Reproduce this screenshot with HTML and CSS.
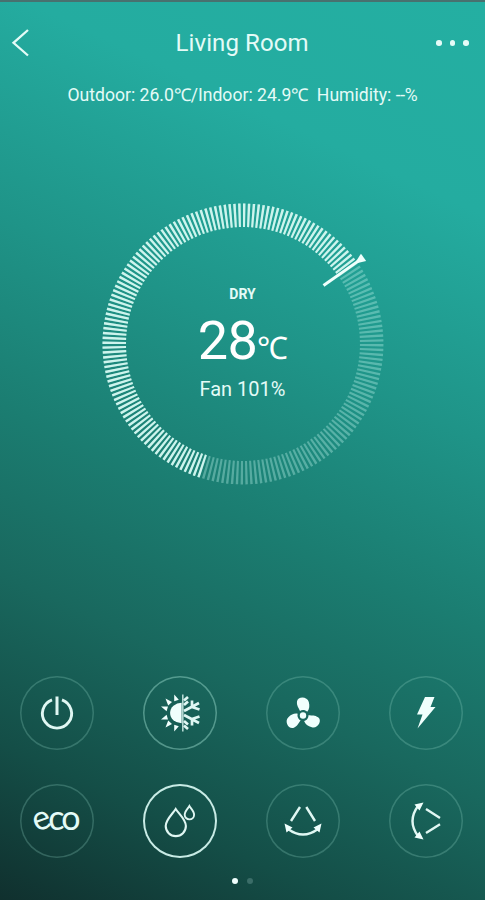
FILE: index.html
```
<!DOCTYPE html>
<html lang="en">
<head>
    <meta charset="UTF-8">
    <meta name="viewport" content="width=device-width, initial-scale=1.0">
    <title>Living Room</title>
    <link rel="stylesheet" href="styles.css">
</head>
<body>
    <div class="app">
        <header class="top-bar">
            <a href="#back" class="back" aria-label="Back">
                <svg width="20" height="30" viewBox="0 0 20 30"><path d="M18 2 L3.5 14.8 L18 27.5"/></svg>
            </a>
            <h1>Living Room</h1>
            <div class="more"><span></span><span></span><span></span></div>
        </header>

        <p class="climate">Outdoor: 26.0<span class="deg">℃</span>/Indoor: 24.9<span class="deg">℃</span>&nbsp; Humidity: <span class="dashes">--</span>%</p>

        <div class="dial">
            <svg class="dial-ring" width="290" height="290" viewBox="-145 -145 290 290">
                <circle class="ticks" r="128.7" pathLength="360"/>
                <path class="ticks on" pathLength="216" d="M-39.8 122.4 A128.7 128.7 0 1 1 104.1 -75.6"/>
                <g transform="translate(-1.2 -0.8) rotate(54.8)">
                    <path class="needle" d="M0 -100 V-145"/>
                    <path class="needle-tip" d="M-4.5 -149 H4.5 L1.2 -141 H-1.2 Z"/>
                </g>
            </svg>
            <div class="reading">
                <div class="mode">DRY</div>
                <div class="temp">28<span class="unit">℃</span></div>
                <div class="fan">Fan 101%</div>
            </div>
        </div>

        <div class="controls">
            <button aria-label="Power">
                <svg class="line" viewBox="-37 -37 74 74">
                    <path stroke-width="2.9" d="M-5 -13.2 A14.6 14.6 0 1 0 5 -13.2"/>
                    <path stroke-width="3" d="M0 -16.5 V2"/>
                </svg>
            </button>
            <button class="lit" aria-label="Mode">
                <svg viewBox="-37 -37 74 74">
                    <path class="fill" d="M1.6 -10.2 A11.5 10.2 0 0 0 1.6 10.2 Z"/>
                    <path class="fill" d="M-5.8 -18.5 L-1.2 -13.2 L-5.8 -11.8 Z M-14.5 -14.5 L-8 -11 L-11.8 -7.6 Z M-19 -6.5 L-12 -6.4 L-13.4 -1.7 Z M-19 6.5 L-13.4 1.7 L-12 6.4 Z M-14.5 14.5 L-11.8 7.6 L-8 11 Z M-5.8 18.5 L-5.8 11.8 L-1.2 13.2 Z"/>
                    <path class="thin" d="M2.8 -18.5 V18.5"/>
                    <g class="line" stroke-width="2.7">
                        <path d="M4 -12.5 L8 -16 M4 12.5 L8 16 M4 -8 L8 -11.5 M4 8 L8 11.5 M4 -2 L19 -10 M4 2 L19 10 M12 -6 L12 -12.5 M12 -6 L19.5 -3.5 M12 6 L12 12.5 M12 6 L19.5 3.5"/>
                    </g>
                </svg>
            </button>
            <button aria-label="Fan">
                <svg viewBox="-37 -37 74 74">
                    <g class="fill" transform="translate(0 2.5)">
                        <circle r="3.2"/>
                        <path id="blade" d="M-3 -4.5 C-4.5 -8 -6.5 -10 -6 -14 C-5.5 -19.5 4.5 -19.5 5.8 -13.5 C6.8 -9.5 6.5 -6.5 4.2 -3.7 C2.5 -5.6 -1 -6 -3 -4.5 Z"/>
                        <use href="#blade" transform="rotate(120)"/>
                        <use href="#blade" transform="rotate(240)"/>
                    </g>
                </svg>
            </button>
            <button aria-label="Turbo">
                <svg viewBox="-37 -37 74 74">
                    <path class="fill" d="M-1 -16 H8.5 L4.5 -6 H9.5 L-8.5 15.5 L-3.5 1.5 H-9 Z"/>
                </svg>
            </button>
            <button aria-label="Eco"><span class="eco"><span class="tilt">e</span>co</span></button>
            <button class="active" aria-label="Dry">
                <svg class="line" viewBox="-37 -37 74 74">
                    <path stroke-width="2.1" d="M-4.3 -12 C-7 -7.5 -14.3 -1.5 -14.3 5 A10.1 10.1 0 0 0 5.9 5 C5.9 -1.5 -1.5 -7.5 -4.3 -12 Z"/>
                    <path stroke-width="1.9" d="M9.4 -15 C8 -12.5 4.7 -9.5 4.7 -6.3 A4.7 4.7 0 0 0 14.1 -6.3 C14.1 -9.5 10.8 -12.5 9.4 -15 Z"/>
                </svg>
            </button>
            <button aria-label="Horizontal swing">
                <svg viewBox="-37 -37 74 74">
                    <g id="swing">
                        <path class="line" stroke-width="2.4" d="M-3 -14 L-12 0 M3.3 -14 L12 0 M-15 8 Q0 19 15 8"/>
                        <path class="fill" d="M-18.5 2.5 L-10.5 6.5 L-16.5 11.5 Z M18.5 2.5 L10.5 6.5 L16.5 11.5 Z"/>
                    </g>
                </svg>
            </button>
            <button aria-label="Vertical swing">
                <svg viewBox="-37 -37 74 74"><use href="#swing" transform="rotate(90)"/></svg>
            </button>
        </div>

        <div class="pager"><span class="current"></span><span></span></div>
    </div>
</body>
</html>
```
FILE: styles.css
```
* {
    box-sizing: border-box;
}
body {
    margin: 0;
    font-family: Roboto, "Liberation Sans", sans-serif;
    color: #e4fbf7;
}
.app {
    height: 900px;
    border-top: 2px solid #48716f;
    background: linear-gradient(205deg, #24afa2 0%, #24aca0 19%, #1f9488 39%, #1b7d71 56%, #19685e 71%, #144e47 86%, #10302e 100%);
    display: flex;
    flex-direction: column;
    overflow: hidden;
}
.top-bar {
    display: flex;
    align-items: center;
    justify-content: space-between;
    height: 82px;
    padding: 0 16px 0 10px;
}
.back {
    width: 38px;
    height: 30px;
}
.back path {
    fill: none;
    stroke: #e4fbf7;
    stroke-width: 2.3;
}
h1 {
    margin: 0;
    font-size: 24px;
    font-weight: 400;
    letter-spacing: 0.1px;
}
.more {
    display: flex;
    gap: 8px;
}
.more span {
    width: 5.6px;
    height: 5.6px;
    border-radius: 50%;
    background: #e4fbf7;
}
.climate {
    margin: 0;
    height: 24px;
    line-height: 23px;
    font-size: 17.6px;
    text-align: center;
    white-space: nowrap;
}
.deg {
    letter-spacing: -1.2px;
}
.dashes {
    letter-spacing: -0.4px;
}
.dial {
    display: grid;
    place-items: center;
    width: 290px;
    height: 290px;
    margin: 91px auto 0;
}
.dial-ring, .reading {
    grid-area: 1 / 1;
}
.dial-ring {
    overflow: visible;
}
.ticks {
    fill: none;
    stroke: rgba(190, 245, 235, 0.36);
    stroke-width: 23.5;
    stroke-dasharray: 1 1;
}
.ticks.on {
    stroke: #cdf4ed;
}
.needle {
    stroke: #effffc;
    stroke-width: 3;
}
.needle-tip {
    fill: #effffc;
}
.reading {
    margin-top: -3px;
    text-align: center;
}
.mode {
    font-size: 14px;
    font-weight: 700;
    line-height: 19px;
}
.temp {
    height: 69px;
    font-size: 54px;
    line-height: 74px;
    letter-spacing: -0.8px;
    color: #fff;
}
.unit {
    font-size: 31px;
}
.fan {
    margin-top: 5px;
    font-size: 20px;
    line-height: 22px;
}
.controls {
    display: grid;
    grid-template-columns: repeat(4, 74px);
    gap: 34px 49.1px;
    margin: 187px 0 0 19.5px;
}
.controls button {
    display: flex;
    align-items: center;
    justify-content: center;
    width: 74px;
    height: 74px;
    padding: 0;
    border: 0;
    border-radius: 50%;
    box-shadow: inset 0 0 0 1.5px rgba(150, 215, 200, 0.26);
    background: none;
    color: #e4fbf7;
}
.controls button.lit {
    box-shadow: inset 0 0 0 1.5px rgba(150, 215, 200, 0.48);
}
.controls button.active {
    box-shadow: inset 0 0 0 2px #c8ebe5;
}
.controls svg {
    width: 74px;
    height: 74px;
}
.line {
    fill: none;
    stroke: #e0f7f3;
}
.fill {
    fill: #f0fffd;
}
.thin {
    stroke: #b4d8d2;
    stroke-width: 1.6;
}
.eco {
    font-family: Lato, sans-serif;
    font-size: 34px;
    line-height: 40px;
    letter-spacing: -3px;
    margin: -9px 0 0 -2px;
}
.tilt {
    display: inline-block;
    transform: rotate(-20deg);
    transform-origin: 50% 62%;
}
.pager {
    display: flex;
    justify-content: center;
    gap: 9px;
    margin-top: 20px;
}
.pager span {
    width: 6px;
    height: 6px;
    border-radius: 50%;
    background: #3b6d68;
}
.pager .current {
    background: #f0fffd;
}
```
